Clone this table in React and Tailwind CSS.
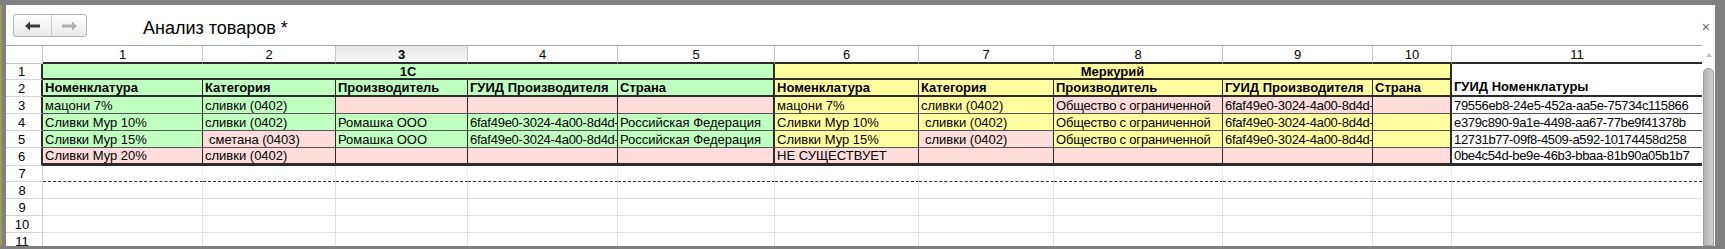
import React from 'react'

const COLW = ['w-[160px]', 'w-[133px]', 'w-[132px]', 'w-[150px]', 'w-[157px]', 'w-[144px]', 'w-[135px]', 'w-[169px]', 'w-[150px]', 'w-[79px]', 'w-[250px]']

const BG = { G: 'bg-[#c0ffc0]', Y: 'bg-[#ffffa0]', P: 'bg-[#ffdcdc]', W: 'bg-white' }

// right border of a data cell, by column
const rightDark = (i) => {
  if (i === 4 || i === 9) return 'border-r-2 border-r-[#2b2b2b]'
  if (i === 10) return ''
  return 'border-r border-r-[#2b2b2b]'
}

// long texts are squeezed a little, as in the bitmap font of the original
const squeeze = (i) => {
  if (i === 10) return 'tracking-[-0.35px]'
  if (i === 3 || i === 8) return 'tracking-[-0.25px]'
  if (i === 7) return 'tracking-[-0.2px]'
  return ''
}

const data = [
  [['мацони 7%', 'G'], ['сливки (0402)', 'G'], ['', 'P'], ['', 'P'], ['', 'P'], ['мацони 7%', 'Y'], ['сливки (0402)', 'Y'], ['Общество с ограниченной', 'P'], ['6faf49e0-3024-4a00-8d4d-', 'P'], ['', 'P'], ['79556eb8-24e5-452a-aa5e-75734c115866', 'W']],
  [['Сливки Мур 10%', 'G'], ['сливки (0402)', 'G'], ['Ромашка ООО', 'G'], ['6faf49e0-3024-4a00-8d4d-', 'G'], ['Российская Федерация', 'G'], ['Сливки Мур 10%', 'Y'], [' сливки (0402)', 'Y'], ['Общество с ограниченной', 'Y'], ['6faf49e0-3024-4a00-8d4d-', 'Y'], ['', 'Y'], ['e379c890-9a1e-4498-aa67-77be9f41378b', 'W']],
  [['Сливки Мур 15%', 'G'], [' сметана (0403)', 'P'], ['Ромашка ООО', 'G'], ['6faf49e0-3024-4a00-8d4d-', 'G'], ['Российская Федерация', 'G'], ['Сливки Мур 15%', 'Y'], [' сливки (0402)', 'P'], ['Общество с ограниченной', 'Y'], ['6faf49e0-3024-4a00-8d4d-', 'Y'], ['', 'Y'], ['12731b77-09f8-4509-a592-10174458d258', 'W']],
  [['Сливки Мур 20%', 'P'], ['сливки (0402)', 'P'], ['', 'P'], ['', 'P'], ['', 'P'], ['НЕ СУЩЕСТВУЕТ', 'P'], ['', 'P'], ['', 'P'], ['', 'P'], ['', 'P'], ['0be4c54d-be9e-46b3-bbaa-81b90a05b1b7', 'W']],
]

const heads = ['Номенклатура', 'Категория', 'Производитель', 'ГУИД Производителя', 'Страна', 'Номенклатура', 'Категория', 'Производитель', 'ГУИД Производителя', 'Страна']

const RowHead = ({ n, dark }) => (
  <div className={`w-[37px] shrink-0 flex items-center justify-center pr-[4px] ${dark ? 'border-r-2 border-r-[#2b2b2b]' : 'border-r border-r-[#d4d4d4]'} border-b border-b-[#d4d4d4]`}>
    {n}
  </div>
)

const App = () => {
  return (
    <div className="w-[1725px] h-[249px] bg-[#808080] flex flex-col font-['Liberation_Sans',Arial,sans-serif] text-black overflow-hidden">
      <div className="h-[5px] shrink-0" />
      <div className="flex h-[241px] shrink-0">
        <div className="w-[2px] bg-[#a09a62]" />
        <div className="w-[4px] bg-[#808080]" />
        <div className="w-[1709px] bg-white flex flex-col">
          {/* title bar */}
          <div className="h-[40px] shrink-0 flex items-start">
            <div className="ml-[7px] mt-[9px] w-[74px] h-[23px] rounded-[3px] border border-[#b4b4b4] bg-linear-to-b from-white to-[#eaeaea] flex">
              <div className="w-[38px] border-r border-r-[#c8c8c8] flex items-center justify-center">
                <svg width="15" height="10" viewBox="0 0 15 10"><path d="M0 5 L5 0.5 V3.5 H15 V6.5 H5 V9.5 Z" fill="#3c3c3c" /></svg>
              </div>
              <div className="flex-1 flex items-center justify-center">
                <svg width="15" height="10" viewBox="0 0 15 10"><path d="M15 5 L10 0.5 V3.5 H0 V6.5 H10 V9.5 Z" fill="#b0b0b0" /></svg>
              </div>
            </div>
            <div className="ml-[56px] mt-[12px] text-[18px] leading-[22px]">Анализ товаров *</div>
            <div className="ml-auto mr-[5px] mt-[15px] text-[14px] leading-[14px] text-[#666]">×</div>
          </div>

          {/* spreadsheet */}
          <div className="flex h-[201px] text-[13px] leading-[15px]">
            <div className="w-[1696px] overflow-hidden flex flex-col">
              {/* column header */}
              <div className="flex h-[19px] shrink-0 border-t border-t-[#a8a8a8]">
                <div className="w-[37px] shrink-0 border-r border-r-[#c8c8c8] border-b border-b-[#c8c8c8]" />
                {COLW.map((w, i) => (
                  <div key={i} className={`${w} shrink-0 flex items-center justify-center border-b-2 border-b-[#2b2b2b] ${i < 10 ? 'border-r border-r-[#c8c8c8]' : ''} ${i === 2 ? 'bg-linear-to-b from-[#e6e6e6] to-[#f6f6f6] font-bold' : ''}`}>
                    {i + 1}
                  </div>
                ))}
              </div>

              {/* row 1 */}
              <div className="flex h-[16px] shrink-0">
                <RowHead n={1} dark />
                <div className="w-[732px] shrink-0 bg-[#c0ffc0] border-r-2 border-r-[#2b2b2b] border-b-2 border-b-[#2b2b2b] flex items-center justify-center font-bold">1С</div>
                <div className="w-[677px] shrink-0 bg-[#ffffa0] border-r-2 border-r-[#2b2b2b] border-b-2 border-b-[#2b2b2b] flex items-center justify-center font-bold">Меркурий</div>
                <div className="w-[250px] shrink-0" />
              </div>

              {/* row 2 */}
              <div className="flex h-[17px] shrink-0">
                <RowHead n={2} dark />
                {heads.map((h, i) => (
                  <div key={i} className={`${COLW[i]} shrink-0 ${i < 5 ? 'bg-[#c0ffc0]' : 'bg-[#ffffa0]'} ${rightDark(i)} border-b-2 border-b-[#2b2b2b] pl-[2px] flex items-center font-bold whitespace-nowrap overflow-hidden`}>
                    {h}
                  </div>
                ))}
                <div className="w-[250px] shrink-0 border-b-2 border-b-[#2b2b2b] pl-[2px] flex items-end font-bold -mt-[16px] h-[33px] pb-[1px]">ГУИД Номенклатуры</div>
              </div>

              {/* rows 3-6 */}
              {data.map((row, r) => (
                <div key={r} className={`flex shrink-0 ${r === 3 ? 'h-[18px]' : 'h-[17px]'}`}>
                  <RowHead n={r + 3} dark />
                  {row.map(([t, c], i) => (
                    <div key={i} className={`${COLW[i]} shrink-0 ${BG[c]} ${rightDark(i)} ${r === 3 ? 'border-b-3 border-b-[#2b2b2b]' : 'border-b border-b-[#555]'} ${t.startsWith(' ') ? 'pl-[6px]' : 'pl-[2px]'} ${squeeze(i)} flex items-center whitespace-nowrap overflow-hidden`}>
                      {t.trim()}
                    </div>
                  ))}
                </div>
              ))}

              {/* empty rows */}
              {[7, 8, 9, 10, 11].map((n) => (
                <div key={n} className={`flex shrink-0 ${n === 7 ? 'h-[16px]' : 'h-[17px]'}`}>
                  <RowHead n={n} />
                  {COLW.map((w, i) => (
                    <div key={i} className={`${w} shrink-0 ${i < 10 ? 'border-r border-r-[#e2e2e2]' : ''} ${n === 7 ? 'border-b border-dashed border-b-[#333]' : 'border-b border-b-[#e2e2e2]'}`} />
                  ))}
                </div>
              ))}
            </div>

            {/* scrollbar */}
            <div className="w-[13px] flex flex-col items-center">
              <div className="mt-[8px] w-0 h-0 border-l-[3px] border-r-[3px] border-b-[4px] border-l-transparent border-r-transparent border-b-[#c0c0c0]" />
              <div className="mt-[11px] w-[11px] flex-1 rounded-t-[5px] bg-linear-to-r from-[#b4b4b4] to-[#cfcfcf] border border-[#a0a0a0]" />
            </div>
          </div>
        </div>
        <div className="w-[10px] bg-[#808080]" />
      </div>
      <div className="h-[3px] shrink-0" />
    </div>
  )
}

export default App
